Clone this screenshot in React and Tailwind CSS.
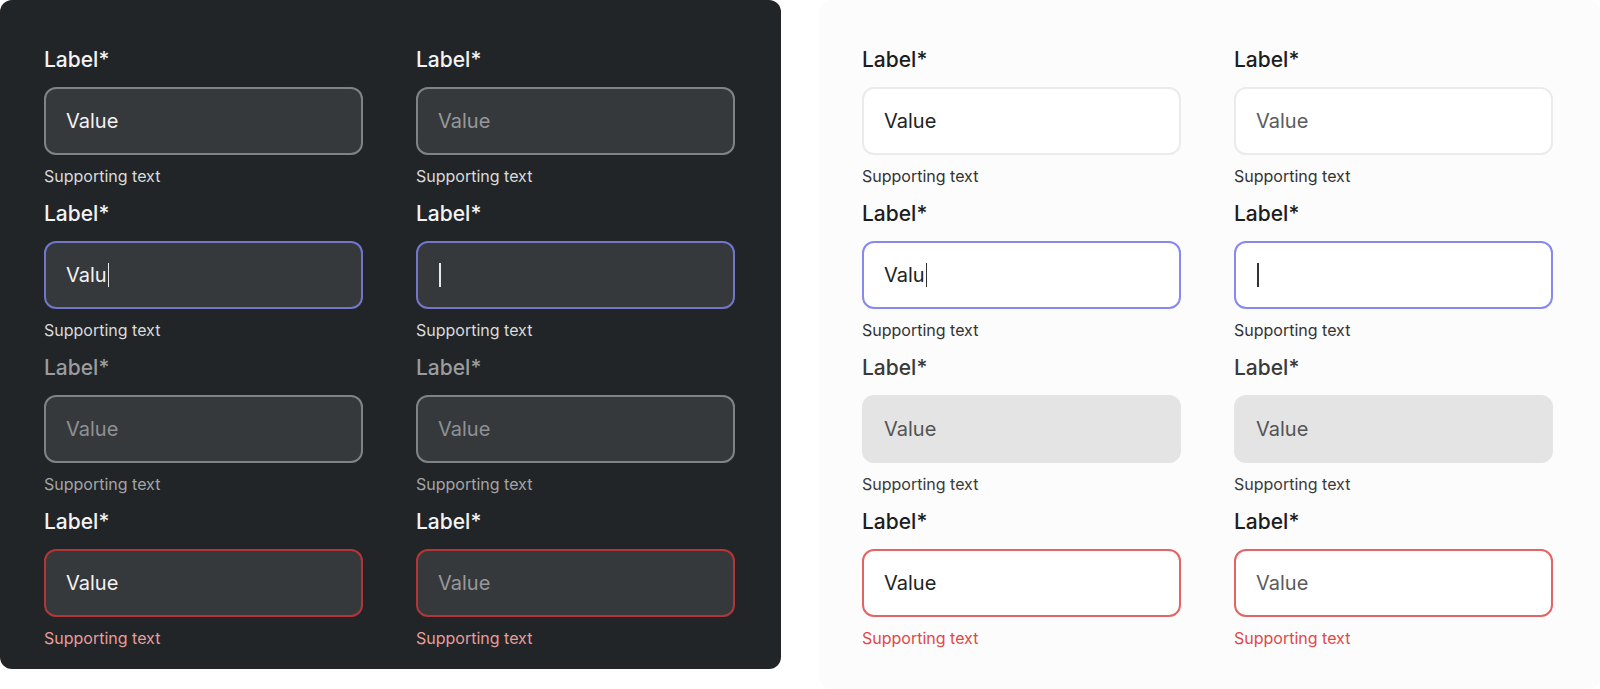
const FONT = { fontFamily: 'Inter, "Noto Sans", sans-serif' };

const themes = {
  dark: {
    panel: "bg-[#212527] rounded-[12px] h-[669px] pl-[44px]",
    label: "text-[#f3f3f3]",
    labelDisabled: "text-[#9b9c9d]",
    box: "bg-[#36393c] border-[#808284]",
    boxFocus: "bg-[#36393c] border-[#7275c8]",
    boxDisabled: "bg-[#36393c] border-[#808284]",
    boxError: "bg-[#36393c] border-[#b23638]",
    value: "text-[#f2f2f2]",
    placeholder: "text-[#96989a]",
    valueDisabled: "text-[#8f9193]",
    caret: "bg-[#e8e8e8]",
    help: "text-[#dadada]",
    helpDisabled: "text-[#a3a4a5]",
    helpError: "text-[#e89c9c]",
  },
  light: {
    panel: "bg-[#fcfcfc] rounded-[12px] h-[689px] pl-[43px]",
    label: "text-[#1d1d1d]",
    labelDisabled: "text-[#3a3a3a]",
    box: "bg-white border-[#ebebeb]",
    boxFocus: "bg-white border-[#8889f0]",
    boxDisabled: "bg-[#e4e4e4] border-[#e4e4e4]",
    boxError: "bg-white border-[#e46464]",
    value: "text-[#222222]",
    placeholder: "text-[#5b5b5b]",
    valueDisabled: "text-[#545454]",
    caret: "bg-[#333333]",
    help: "text-[#333333]",
    helpDisabled: "text-[#3a3a3a]",
    helpError: "text-[#e04848]",
  },
};

const fields = [
  { state: "default", text: "Value" },
  { state: "default", text: "Value", placeholder: true },
  { state: "focus", text: "Valu", caret: true },
  { state: "focus", text: "", caret: true },
  { state: "disabled", text: "Value" },
  { state: "disabled", text: "Value" },
  { state: "error", text: "Value" },
  { state: "error", text: "Value", placeholder: true },
];

function Field({ t, state, text, placeholder, caret }) {
  const disabled = state === "disabled";
  const boxClass =
    state === "focus" ? t.boxFocus : state === "disabled" ? t.boxDisabled : state === "error" ? t.boxError : t.box;
  const valueClass = disabled ? t.valueDisabled : placeholder ? t.placeholder : t.value;
  const helpClass = disabled ? t.helpDisabled : state === "error" ? t.helpError : t.help;
  return (
    <div className="flex flex-col">
      <div className={`text-[21px] leading-[28px] font-medium ${disabled ? t.labelDisabled : t.label}`}>Label*</div>
      <div className={`mt-[13px] h-[68px] w-[319px] rounded-[12px] border-2 flex items-center pl-[20px] ${boxClass}`}>
        <span className={`text-[20px] leading-[28px] ${valueClass}`}>{text}</span>
        {caret && <span className={`inline-block w-[1.5px] h-[24px] ml-[1px] ${t.caret}`} />}
      </div>
      <div className={`mt-[9px] text-[16px] leading-[24px] ${helpClass}`}>Supporting text</div>
    </div>
  );
}

function Panel({ t }) {
  return (
    <div className={`w-[781px] shrink-0 pt-[46px] ${t.panel}`}>
      <div className="grid grid-cols-[319px_319px] gap-x-[53px] gap-y-[12px]">
        {fields.map((f, i) => (
          <Field key={i} t={t} {...f} />
        ))}
      </div>
    </div>
  );
}

export default function App() {
  return (
    <div className="w-[1600px] h-[689px] bg-white flex items-start gap-[38px] overflow-hidden" style={FONT}>
      <Panel t={themes.dark} />
      <Panel t={themes.light} />
    </div>
  );
}
